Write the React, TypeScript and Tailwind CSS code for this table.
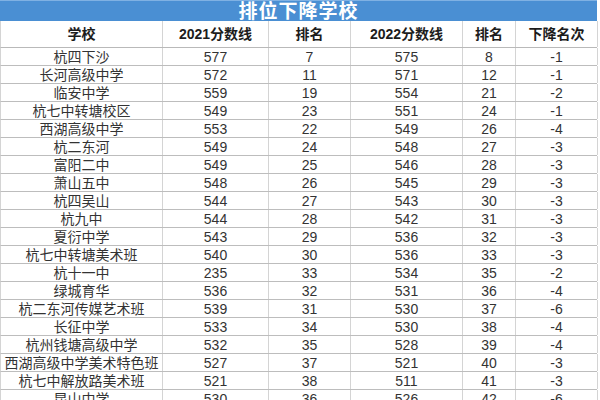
const rows: [string, number, number, number, number, number][] = [
  ["杭四下沙", 577, 7, 575, 8, -1],
  ["长河高级中学", 572, 11, 571, 12, -1],
  ["临安中学", 559, 19, 554, 21, -2],
  ["杭七中转塘校区", 549, 23, 551, 24, -1],
  ["西湖高级中学", 553, 22, 549, 26, -4],
  ["杭二东河", 549, 24, 548, 27, -3],
  ["富阳二中", 549, 25, 546, 28, -3],
  ["萧山五中", 548, 26, 545, 29, -3],
  ["杭四吴山", 544, 27, 543, 30, -3],
  ["杭九中", 544, 28, 542, 31, -3],
  ["夏衍中学", 543, 29, 536, 32, -3],
  ["杭七中转塘美术班", 540, 30, 536, 33, -3],
  ["杭十一中", 235, 33, 534, 35, -2],
  ["绿城育华", 536, 32, 531, 36, -4],
  ["杭二东河传媒艺术班", 539, 31, 530, 37, -6],
  ["长征中学", 533, 34, 530, 38, -4],
  ["杭州钱塘高级中学", 532, 35, 528, 39, -4],
  ["西湖高级中学美术特色班", 527, 37, 521, 40, -3],
  ["杭七中解放路美术班", 521, 38, 511, 41, -3],
  ["昆山中学", 530, 36, 526, 42, -6],
];

const headers = ["学校", "2021分数线", "排名", "2022分数线", "排名", "下降名次"];
const cols = "grid grid-cols-[162px_106px_82px_112px_53px_82px]";

export default function App() {
  return (
    <div
      className="w-[600px] h-[400px] overflow-hidden bg-white"
      style={{ fontFamily: '"Liberation Sans", "Noto Sans CJK SC", sans-serif' }}
    >
      <div className="w-[597px]">
        <div className="h-[21px] bg-[#4a8fd3] border-t border-[#7fb1e3] flex items-center justify-center text-white font-bold text-[19px] leading-none tracking-[1px]">
          排位下降学校
        </div>
        <div className={`${cols} h-[27px] border-b border-[#b9b9b9] border-l border-l-[#d4d4d4]`}>
          {headers.map((h, i) => (
            <div
              key={i}
              className="flex items-center justify-center border-r border-[#d4d4d4] font-bold text-[14px] text-[#1c1c1c]"
            >
              {h}
            </div>
          ))}
        </div>
        {rows.map((r, i) => (
          <div key={i} className={`${cols} h-[18px] border-b border-[#bdbdbd] border-l border-l-[#d4d4d4]`}>
            {r.map((v, j) => (
              <div
                key={j}
                className="flex items-center justify-center border-r border-[#d4d4d4] text-[14px] leading-none text-[#333] whitespace-nowrap"
              >
                {v}
              </div>
            ))}
          </div>
        ))}
      </div>
    </div>
  );
}
